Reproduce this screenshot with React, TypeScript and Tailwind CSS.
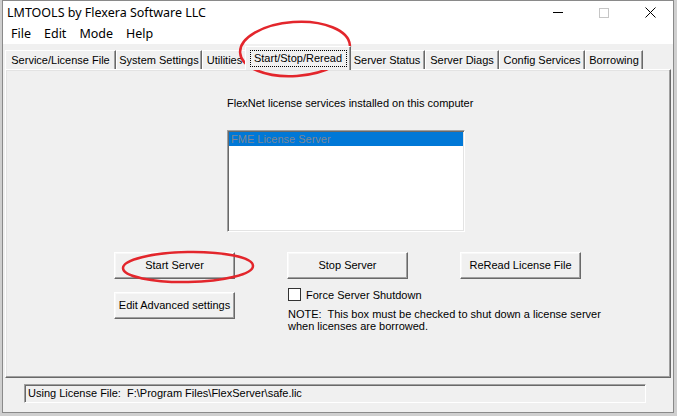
const tabs = [
  { label: "Service/License File", w: "w-[111px]" },
  { label: "System Settings", w: "w-[86px]" },
  { label: "Utilities", w: "w-[45px]" },
  { label: "Start/Stop/Reread", w: "w-[106px]", active: true },
  { label: "Server Status", w: "w-[76px]" },
  { label: "Server Diags", w: "w-[74px]" },
  { label: "Config Services", w: "w-[86px]" },
  { label: "Borrowing", w: "w-[58px]" },
];

function WinButton({ label }: { label: string }) {
  return (
    <div className="w-[121px] h-[27px] flex items-center justify-center border border-t-white border-l-white border-r-[#696969] border-b-[#696969] shadow-[inset_-1px_-1px_0_#a0a0a0,inset_1px_1px_0_#f8f8f8] bg-[#f0f0f0] text-[11px] leading-[13px] text-black">
      {label}
    </div>
  );
}

function TabStrip() {
  return (
    <div className="flex items-end h-[23px]">
      {tabs.map((t) =>
        t.active ? (
          <div
            key={t.label}
            className={`${t.w} relative z-10 -mx-[2px] -mb-[1px] h-[24px] bg-[#f0f0f0] border-t border-l border-r border-t-white border-l-white border-r-[#696969] shadow-[inset_-1px_0_0_#a0a0a0] flex justify-center pt-[3px]`}
          >
            <span className="h-[17px] w-[97px] border border-dotted border-black flex items-center justify-center text-[11px] leading-[13px]">
              {t.label}
            </span>
          </div>
        ) : (
          <div
            key={t.label}
            className={`${t.w} h-[19px] bg-[#f0f0f0] border-t border-l border-r border-t-white border-l-white border-r-[#696969] shadow-[inset_-1px_0_0_#a0a0a0] flex items-center justify-center text-[11px] leading-[13px] whitespace-nowrap`}
          >
            {t.label}
          </div>
        )
      )}
    </div>
  );
}

export default function App() {
  return (
    <div className="relative w-[677px] h-[416px] bg-[#cfcfcf] overflow-hidden font-['Liberation_Sans',Arial,sans-serif] text-black">
      <div className="ml-[2px] w-[672px] h-[413px] border border-[#8a8a8a] bg-[#f0f0f0] flex flex-col">
        {/* title bar */}
        <div className="h-[23px] bg-white flex items-center justify-between">
          <span className="pl-[4px] font-['Noto_Sans',sans-serif] text-[12.5px] leading-[16px]">
            LMTOOLS by Flexera Software LLC
          </span>
          <div className="flex items-center h-full">
            <div className="w-[46px] h-full flex items-center justify-center">
              <div className="w-[10px] h-[1px] bg-black" />
            </div>
            <div className="w-[46px] h-full flex items-center justify-center">
              <div className="w-[10px] h-[10px] border border-[#c6c6c6]" />
            </div>
            <div className="w-[46px] h-full flex items-center justify-center">
              <svg width="11" height="11" viewBox="0 0 11 11">
                <path d="M0.5 0.5 L10.5 10.5 M10.5 0.5 L0.5 10.5" stroke="#000" strokeWidth="1" />
              </svg>
            </div>
          </div>
        </div>

        {/* menu bar */}
        <div className="h-[20px] bg-white flex items-center gap-[13px] pl-[8px] font-['Noto_Sans',sans-serif] text-[12.5px] leading-[16px]">
          <span>File</span>
          <span>Edit</span>
          <span>Mode</span>
          <span>Help</span>
        </div>

        {/* tabs + panel */}
        <div className="pl-[2px] pt-[2px]">
          <TabStrip />
          <div className="w-[666px] h-[309px] border border-t-white border-l-white border-r-[#696969] border-b-[#696969] shadow-[inset_-1px_-1px_0_#a0a0a0,inset_1px_1px_0_#e3e3e3] flex flex-col">
            <p className="mt-[27px] ml-[221px] text-[11px] leading-[13px]">
              FlexNet license services installed on this computer
            </p>
            <div className="mt-[20px] ml-[221px] w-[238px] h-[102px] bg-white border border-t-[#a0a0a0] border-l-[#a0a0a0] border-r-white border-b-white shadow-[inset_1px_1px_0_#696969,inset_-1px_-1px_0_#e3e3e3] p-[1px]">
              <div className="h-[14px] bg-[#0078d7] text-[11px] leading-[14px] pl-[2px] text-[#7d8794]">
                FME License Server
              </div>
            </div>

            <div className="mt-[20px] ml-[108px] flex gap-[52px]">
              <WinButton label="Start Server" />
              <WinButton label="Stop Server" />
              <WinButton label="ReRead License File" />
            </div>

            <div className="mt-[13px] ml-[108px] flex items-start gap-[53px]">
              <WinButton label="Edit Advanced settings" />
              <div className="-mt-[4px] flex flex-col text-[11px] leading-[12px]">
                <div className="flex items-center h-[13px]">
                  <div className="w-[13px] h-[13px] border border-[#333] bg-white" />
                  <span className="ml-[5px]">Force Server Shutdown</span>
                </div>
                <p className="mt-[7px]">
                  NOTE:&nbsp; This box must be checked to shut down a license server
                </p>
                <p>when licenses are borrowed.</p>
              </div>
            </div>
          </div>
        </div>

        {/* status field */}
        <div className="mt-[6px] ml-[21px] w-[622px] h-[19px] border border-t-[#a0a0a0] border-l-[#a0a0a0] border-r-white border-b-white shadow-[inset_1px_1px_0_#696969] flex items-center pl-[3px] text-[11px] leading-[13px]">
          Using License File:&nbsp; F:\Program Files\FlexServer\safe.lic
        </div>
      </div>

      {/* red annotation circles */}
      <svg className="absolute inset-0 pointer-events-none" width="677" height="416">
        <ellipse cx="295" cy="49" rx="55" ry="27" fill="none" stroke="#e3262c" strokeWidth="2.5" transform="rotate(-4 295 49)" />
        <ellipse cx="188" cy="267" rx="65" ry="15" fill="none" stroke="#e3262c" strokeWidth="2.5" transform="rotate(-1 188 267)" />
      </svg>
    </div>
  );
}
